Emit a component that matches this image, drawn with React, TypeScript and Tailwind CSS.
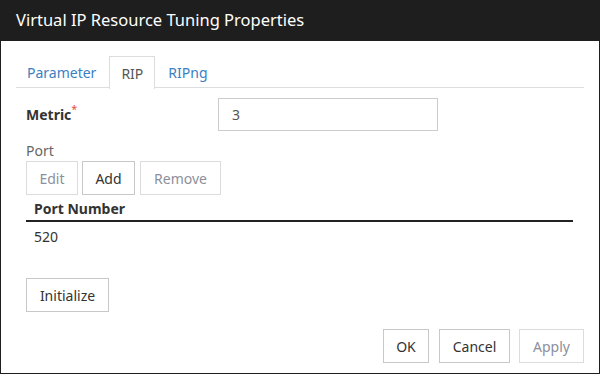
import React from "react";

const font = "font-['Noto_Sans','Open_Sans',sans-serif]";

function Btn({
  label,
  disabled,
  className = "",
}: {
  label: string;
  disabled?: boolean;
  className?: string;
}) {
  return (
    <button
      className={`h-[34px] border text-[14px] flex items-center justify-center bg-white ${
        disabled
          ? "border-[#dcdcdc] text-[#8c8f9c]"
          : "border-[#c8c8c8] text-[#333]"
      } ${className}`}>
      {label}
    </button>
  );
}

export default function App() {
  const tabs = [
    { name: "Parameter", active: false },
    { name: "RIP", active: true },
    { name: "RIPng", active: false },
  ];

  return (
    <div
      className={`w-[600px] h-[374px] flex flex-col bg-white border-x border-b border-[#1e1e1e] ${font}`}>
      {/* Title bar */}
      <div className="h-[41px] shrink-0 bg-[#1e1e1e] text-white text-[16.5px] flex items-center pl-[15px]">
        Virtual IP Resource Tuning Properties
      </div>

      <div className="px-[15px] pt-[15px] flex flex-col">
        {/* Tabs */}
        <div className="flex border-b border-[#dddddd] h-[32px]">
          {tabs.map((t, i) => (
            <div
              key={t.name}
              className={`h-[32px] flex items-center px-[11px] text-[14px] ${
                i > 0 ? "ml-[2px]" : ""
              } ${
                t.active
                  ? "border border-b-0 border-[#dddddd] bg-white text-[#555] -mb-px h-[33px]"
                  : "text-[#3a80c2]"
              }`}>
              {t.name}
            </div>
          ))}
        </div>

        <div className="pl-[10px] mt-[10px] flex flex-col">
          {/* Metric */}
          <div className="flex items-center h-[33px]">
            <div className="w-[192px] text-[14px] font-bold text-[#333] flex items-start">
              Metric
              <span className="text-[#e0503c] text-[11px] font-normal leading-none -mt-[1px]">
                *
              </span>
            </div>
            <div className="w-[220px] h-[33px] border border-[#cccccc] flex items-center pl-[13px] text-[14px] text-[#555]">
              3
            </div>
          </div>

          {/* Port */}
          <div className="mt-[9px] h-[21px] text-[14px] text-[#666] flex items-center">
            Port
          </div>
          <div className="flex">
            <Btn label="Edit" disabled className="w-[52px]" />
            <Btn label="Add" className="w-[53px] ml-[4px]" />
            <Btn label="Remove" disabled className="w-[81px] ml-[5px]" />
          </div>

          {/* Port table */}
          <div className="w-[547px] mt-px">
            <div className="h-[26px] border-b-2 border-[#222] pl-[8px] text-[14px] font-bold text-[#333] flex items-center">
              Port Number
            </div>
            <div className="h-[28px] pl-[8px] text-[14px] text-[#333] flex items-center">
              520
            </div>
          </div>

          <Btn label="Initialize" className="w-[83px] mt-[28px]" />
        </div>

        {/* Footer */}
        <div className="flex justify-end mt-[17px]">
          <Btn label="OK" className="w-[46px]" />
          <Btn label="Cancel" className="w-[71px] ml-[10px]" />
          <Btn label="Apply" disabled className="w-[65px] ml-[9px]" />
        </div>
      </div>
    </div>
  );
}
